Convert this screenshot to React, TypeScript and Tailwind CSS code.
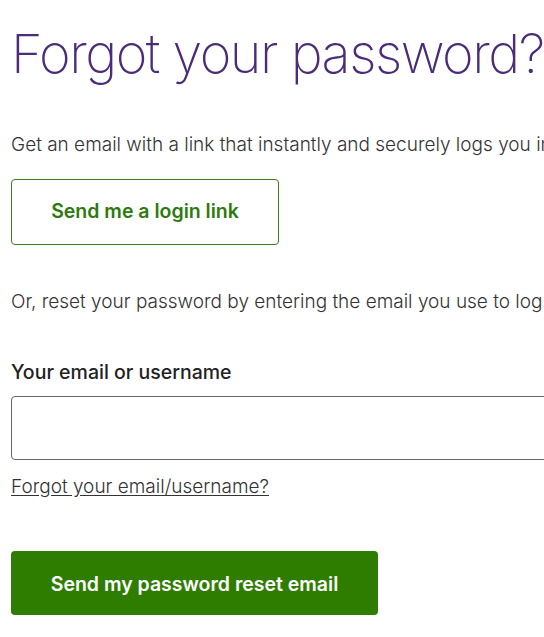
import React from 'react';

const App: React.FC = () => {
  return (
    <div className="w-[544px] h-[637px] overflow-hidden bg-white font-['Inter',sans-serif]">
      <div className="w-[760px] pl-[11px] pt-[22px]">
        <h1 className="text-[54px] leading-[64px] font-extralight tracking-[-1.5px] text-[#4a2c7a] whitespace-nowrap">
          Forgot your password?
        </h1>

        <p className="mt-[47px] text-[19px] leading-[24px] font-light text-[#333] whitespace-nowrap">
          Get an email with a link that instantly and securely logs you in.
        </p>

        <button className="mt-[22px] w-[268px] h-[66px] rounded-[4px] border border-[#3c7d1c] text-[19.5px] font-semibold text-[#2f7a0e]">
          Send me a login link
        </button>

        <p className="mt-[45px] text-[19px] leading-[24px] font-light text-[#333] whitespace-nowrap">
          Or, reset your password by entering the email you use to log in.
        </p>

        <label className="block mt-[46px] text-[19.5px] leading-[24px] font-medium text-[#222] whitespace-nowrap">
          Your email or username
        </label>

        <input
          type="text"
          className="block mt-[12px] w-[700px] h-[64px] rounded-[4px] border border-[#666] px-3 outline-none"
        />

        <a href="#" className="block mt-[15px] text-[19px] leading-[24px] font-light text-[#333] underline underline-offset-2 w-fit">
          Forgot your email/username?
        </a>

        <button className="mt-[52px] w-[367px] h-[64px] pt-[4px] rounded-[4px] bg-[#2e7d00] text-[19.5px] font-semibold text-white">
          Send my password reset email
        </button>
      </div>
    </div>
  );
};

export default App;
